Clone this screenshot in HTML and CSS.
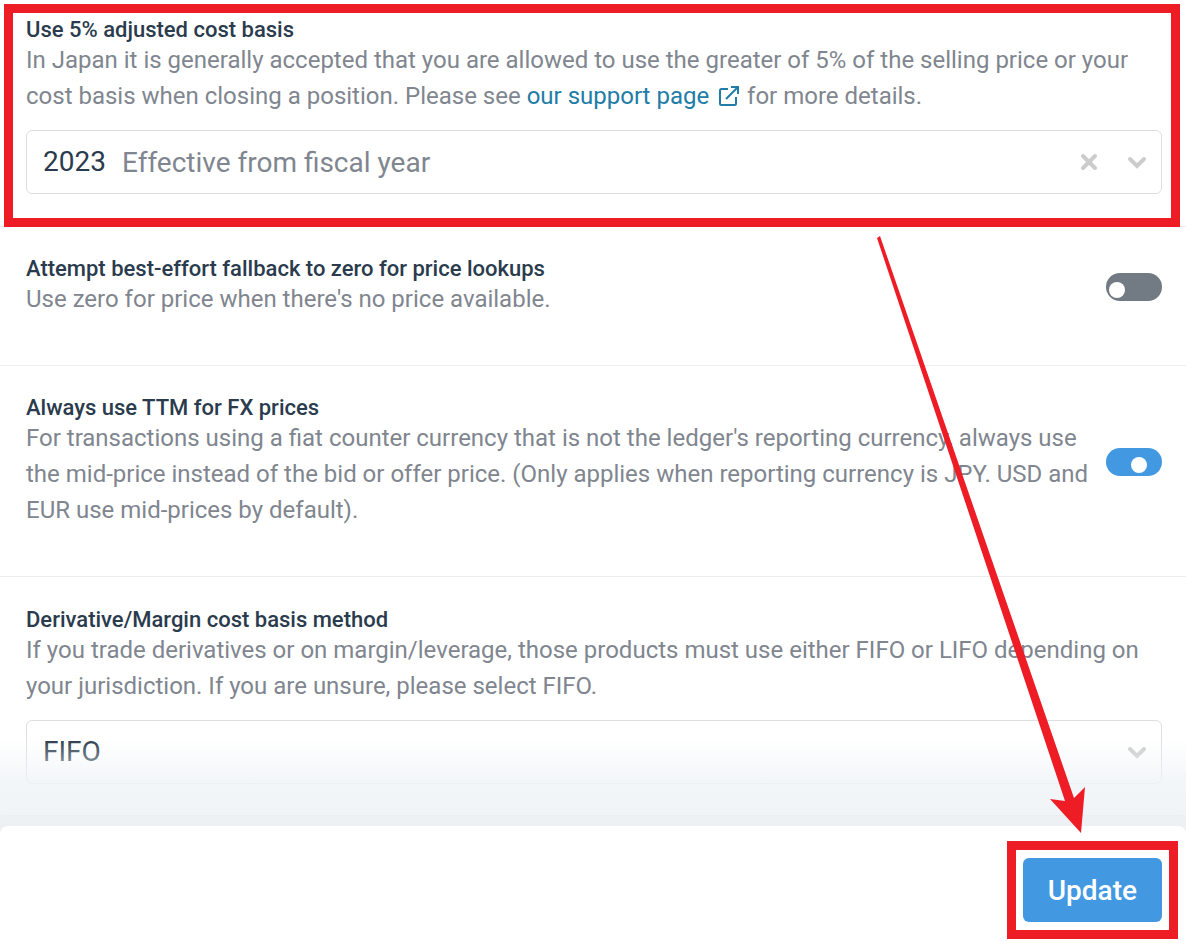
FILE: index.html
```
<!DOCTYPE html>
<html lang="en">
<head>
  <meta charset="UTF-8" />
  <meta name="viewport" content="width=device-width, initial-scale=1.0" />
  <title>Ledger Settings</title>
  <link rel="stylesheet" href="styles.css">
</head>
<body>

<form class="settings">

  <!-- Cost basis -->
  <section class="setting setting-first">
    <div class="setting-text">
      <h2 id="costBasisTitle">Use 5% adjusted cost basis</h2>
      <p>In Japan it is generally accepted that you are allowed to use the greater of 5% of the selling price or your cost basis when closing a position. Please see <a href="#support">our support page <svg class="external" viewBox="0 0 22 22" aria-hidden="true"><path d="M10 4H3.500Q2 4 2 5.500V18.500Q2 20 3.500 20H16.500Q18 20 18 18.500V12M13 2H20V9M20 2L8 14" /></svg></a> for more details.</p>
    </div>
    <div class="select-box">
      <select class="year" id="fiscalYear" aria-labelledby="costBasisTitle fiscalYearLabel">
        <option>2023</option>
        <option>2022</option>
      </select>
      <label class="hint" id="fiscalYearLabel" for="fiscalYear">Effective from fiscal year</label>
      <button class="clear" type="button" aria-label="Clear">
        <svg viewBox="0 0 20 20"><path d="M4 4L16 16M16 4L4 16" /></svg>
      </button>
      <svg class="chevron" viewBox="0 0 20 20" aria-hidden="true"><path d="M3 7L10 14L17 7" /></svg>
    </div>
    <div class="highlight highlight-section"></div>
  </section>

  <!-- Price lookups -->
  <section class="setting setting-row">
    <div class="setting-text">
      <h2><label for="fallback">Attempt best-effort fallback to zero for price lookups</label></h2>
      <p>Use zero for price when there's no price available.</p>
    </div>
    <input class="toggle" type="checkbox" id="fallback" />
  </section>

  <!-- FX prices -->
  <section class="setting setting-row">
    <div class="setting-text">
      <h2><label for="ttm">Always use TTM for FX prices</label></h2>
      <p>For transactions using a fiat counter currency that is not the ledger's reporting currency, always use the mid-price instead of the bid or offer price. (Only applies when reporting currency is JPY. USD and EUR use mid-prices by default).</p>
    </div>
    <input class="toggle" type="checkbox" id="ttm" checked />
  </section>

  <!-- Derivatives -->
  <section class="setting setting-last">
    <div class="setting-text">
      <h2><label for="method">Derivative/Margin cost basis method</label></h2>
      <p>If you trade derivatives or on margin/leverage, those products must use either FIFO or LIFO depending on your jurisdiction. If you are unsure, please select FIFO.</p>
    </div>
    <div class="select-box">
      <select class="method" id="method">
        <option>FIFO</option>
        <option>LIFO</option>
      </select>
      <svg class="chevron" viewBox="0 0 20 20" aria-hidden="true"><path d="M3 7L10 14L17 7" /></svg>
    </div>
    <div class="fade"></div>
  </section>

  <footer class="actions">
    <div class="update-wrap">
      <button class="update" type="submit">Update</button>
      <div class="highlight highlight-button"></div>
    </div>
    <svg class="arrow" viewBox="0 0 210 598" aria-hidden="true"><polygon points="1,2 4,0 198,562 209,551 205,597 174,563 189,565" /></svg>
  </footer>

</form>

</body>
</html>
```
FILE: styles.css
```
body {
  margin: 0;
  background: #edf1f4;
  font-family: Roboto, sans-serif;
  color: #2a3b4d;
}

h2,
p {
  margin: 0;
}

h2 {
  font-size: 22px;
  line-height: 24px;
  font-weight: 500;
}

p {
  font-size: 24px;
  line-height: 36px;
  color: #7f868f;
}

a {
  color: #217ca7;
  text-decoration: none;
}

button,
select {
  font-family: inherit;
}

svg {
  fill: none;
  stroke: currentColor;
}

.settings {
  display: flex;
  flex-direction: column;
  min-height: 100vh;
}

.setting {
  position: relative;
  padding: 30px 24px 48px 26px;
  border-bottom: 1px solid #ebedee;
  background: #fff;
}

.setting-first {
  padding-top: 18px;
  padding-bottom: 32px;
}

.setting-row {
  display: flex;
  align-items: center;
  gap: 16px;
}

.setting-row .setting-text {
  flex: 1;
}

.setting-last {
  margin-bottom: 10px;
  padding-top: 31px;
  padding-bottom: 31px;
  border-radius: 0 0 8px 8px;
}

.external {
  width: 22px;
  height: 22px;
  margin: 0 1px 0 3px;
  vertical-align: -3px;
  stroke-width: 2;
}

/* Select boxes */
.select-box {
  display: flex;
  align-items: center;
  box-sizing: border-box;
  height: 64px;
  margin-top: 16px;
  padding: 0 14px 0 16px;
  border: 1px solid #dcdfe1;
  border-radius: 6px;
  font-size: 28px;
}

.select-box select {
  appearance: none;
  padding: 0;
  border: 0;
  background: none;
  color: inherit;
  font-size: 28px;
  line-height: 36px;
}

.select-box .year {
  width: 64px;
}

.select-box .method {
  flex: 1;
}

.hint {
  flex: 1;
  margin-left: 15px;
  color: #7f868f;
}

.clear {
  display: flex;
  margin-right: 28px;
  padding: 0;
  border: 0;
  background: none;
  color: #ccc;
}

.clear svg,
.chevron {
  width: 20px;
  height: 20px;
  color: #ccc;
  stroke-width: 4;
  stroke-linecap: round;
}

/* Toggles */
.toggle {
  appearance: none;
  flex: none;
  width: 56px;
  height: 28px;
  margin: 0;
  padding: 9px 3px 3px;
  border-radius: 14px;
  background: #727b83;
}

.toggle::before {
  content: "";
  display: block;
  width: 16px;
  height: 16px;
  border-radius: 50%;
  background: #fff;
}

.toggle:checked {
  padding-left: 25px;
  background: #4299e1;
}

/* Footer */
.fade {
  position: absolute;
  inset: auto 0 0 0;
  height: 76px;
  background: linear-gradient(rgba(240, 244, 247, 0), rgba(240, 244, 247, 0.8) 56%, #f0f4f7);
  pointer-events: none;
}

.actions {
  position: relative;
  display: flex;
  flex: 1;
  align-items: flex-start;
  justify-content: flex-end;
  padding: 32px 24px 27px;
  border-radius: 8px 8px 0 0;
  background: #fff;
}

.update-wrap {
  position: relative;
}

.update {
  display: block;
  height: 64px;
  padding: 0 25px;
  border: 0;
  border-radius: 6px;
  background: #4299e1;
  color: #fff;
  font-size: 28px;
  font-weight: 500;
}

/* Callouts */
.highlight {
  position: absolute;
  border: 9px solid #ee1c24;
  pointer-events: none;
}

.highlight-section {
  inset: 4px 6px -1px 4px;
}

.highlight-button {
  inset: -17px -16px;
}

.arrow {
  position: absolute;
  right: 100px;
  bottom: 115px;
  width: 210px;
  height: 598px;
  fill: #ee1c24;
  stroke: none;
  pointer-events: none;
}
```
